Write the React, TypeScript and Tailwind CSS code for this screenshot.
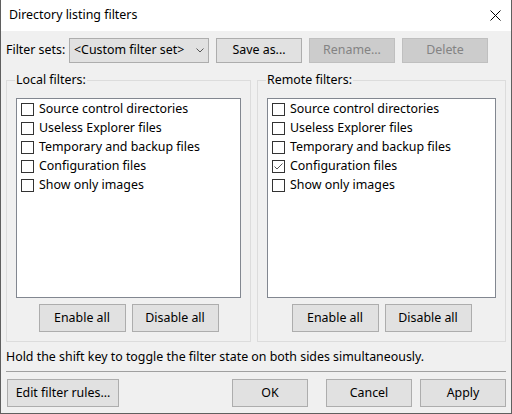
import React from "react";

const font = { fontFamily: '"Noto Sans", "Noto Sans CJK SC", sans-serif' };

function Btn({ children, className = "", disabled = false }: { children: React.ReactNode; className?: string; disabled?: boolean }) {
  return (
    <div
      className={
        "flex items-center justify-center border text-[12.4px] " +
        (disabled ? "bg-[#cccccc] border-[#bfbfbf] text-[#838383] " : "bg-[#e1e1e1] border-[#adadad] text-black ") +
        className
      }
    >
      {children}
    </div>
  );
}

function Check({ label, checked = false }: { label: string; checked?: boolean }) {
  return (
    <div className="flex items-center h-[19px] pl-[4px]">
      <div className="w-[13px] h-[13px] border border-[#333333] bg-white flex items-center justify-center shrink-0">
        {checked && (
          <svg width="11" height="11" viewBox="0 0 11 11">
            <path d="M1.5 5.5 L4 8 L9.5 2.5" stroke="#555555" strokeWidth="1" fill="none" />
          </svg>
        )}
      </div>
      <span className="ml-[5px] text-[12.4px] text-black whitespace-nowrap">{label}</span>
    </div>
  );
}

const items = [
  "Source control directories",
  "Useless Explorer files",
  "Temporary and backup files",
  "Configuration files",
  "Show only images",
];

function Group({ title, width, listWidth, checkedIdx }: { title: string; width: string; listWidth: string; checkedIdx: number }) {
  return (
    <div className={"relative border border-[#dcdcdc] h-[262px] flex flex-col items-center pt-[17px] " + width}>
      <span className="absolute left-[8px] top-[-9px] bg-[#f0f0f0] px-[1px] text-[12.4px] leading-[16px] text-black">{title}</span>
      <div className={"h-[200px] border border-[#828790] bg-white pt-[1px] " + listWidth}>
        {items.map((t, i) => (
          <Check key={t} label={t} checked={i === checkedIdx} />
        ))}
      </div>
      <div className="flex mt-[6px] gap-[6px]">
        <Btn className="w-[87px] h-[28px]">Enable all</Btn>
        <Btn className="w-[87px] h-[28px]">Disable all</Btn>
      </div>
    </div>
  );
}

export default function App() {
  return (
    <div style={font} className="w-[512px] h-[414px] bg-[#f0f0f0] border-l border-r border-b border-[#5f5f5f] flex flex-col">
      <div className="h-[31px] bg-white flex items-center justify-between pl-[8px] pr-[10px] shrink-0">
        <span className="text-[12.4px] text-black">Directory listing filters</span>
        <svg width="11" height="11" viewBox="0 0 11 11">
          <path d="M0.5 0.5 L10.5 10.5 M10.5 0.5 L0.5 10.5" stroke="#000" strokeWidth="1" />
        </svg>
      </div>
      <div className="flex items-center mt-[7px] pl-[5px] h-[25px]">
        <span className="text-[12.4px] text-black w-[63px]">Filter sets:</span>
        <div className="w-[140px] h-[25px] bg-[#e1e1e1] border border-[#adadad] flex items-center justify-between pl-[4px] pr-[4px] text-[12.4px] text-black">
          <span>&lt;Custom filter set&gt;</span>
          <svg width="8" height="5" viewBox="0 0 8 5">
            <path d="M0.5 0.5 L4 4 L7.5 0.5" stroke="#555" fill="none" strokeWidth="1" />
          </svg>
        </div>
        <Btn className="w-[86px] h-[25px] ml-[7px]">Save as...</Btn>
        <Btn disabled className="w-[86px] h-[25px] ml-[7px]">Rename...</Btn>
        <Btn disabled className="w-[86px] h-[25px] ml-[7px]">Delete</Btn>
      </div>
      <div className="flex mt-[17px] pl-[5px]">
        <Group title="Local filters:" width="w-[245px]" listWidth="w-[225px]" checkedIdx={-1} />
        <div className="w-[6px]" />
        <Group title="Remote filters:" width="w-[249px]" listWidth="w-[229px]" checkedIdx={3} />
      </div>
      <div className="pl-[5px] mt-[7px] h-[16px] flex items-center text-[12.4px] text-black whitespace-nowrap">
        Hold the shift key to toggle the filter state on both sides simultaneously.
      </div>
      <div className="mx-[5px] mt-[6px] h-px bg-[#a0a0a0]" />
      <div className="flex mt-[7px] pl-[6px] pr-[5px]">
        <Btn className="w-[112px] h-[28px]">Edit filter rules...</Btn>
        <div className="flex-1" />
        <Btn className="w-[76px] h-[28px]">OK</Btn>
        <Btn className="w-[86px] h-[28px] ml-[18px]">Cancel</Btn>
        <Btn className="w-[86px] h-[28px] ml-[8px]">Apply</Btn>
      </div>
    </div>
  );
}
